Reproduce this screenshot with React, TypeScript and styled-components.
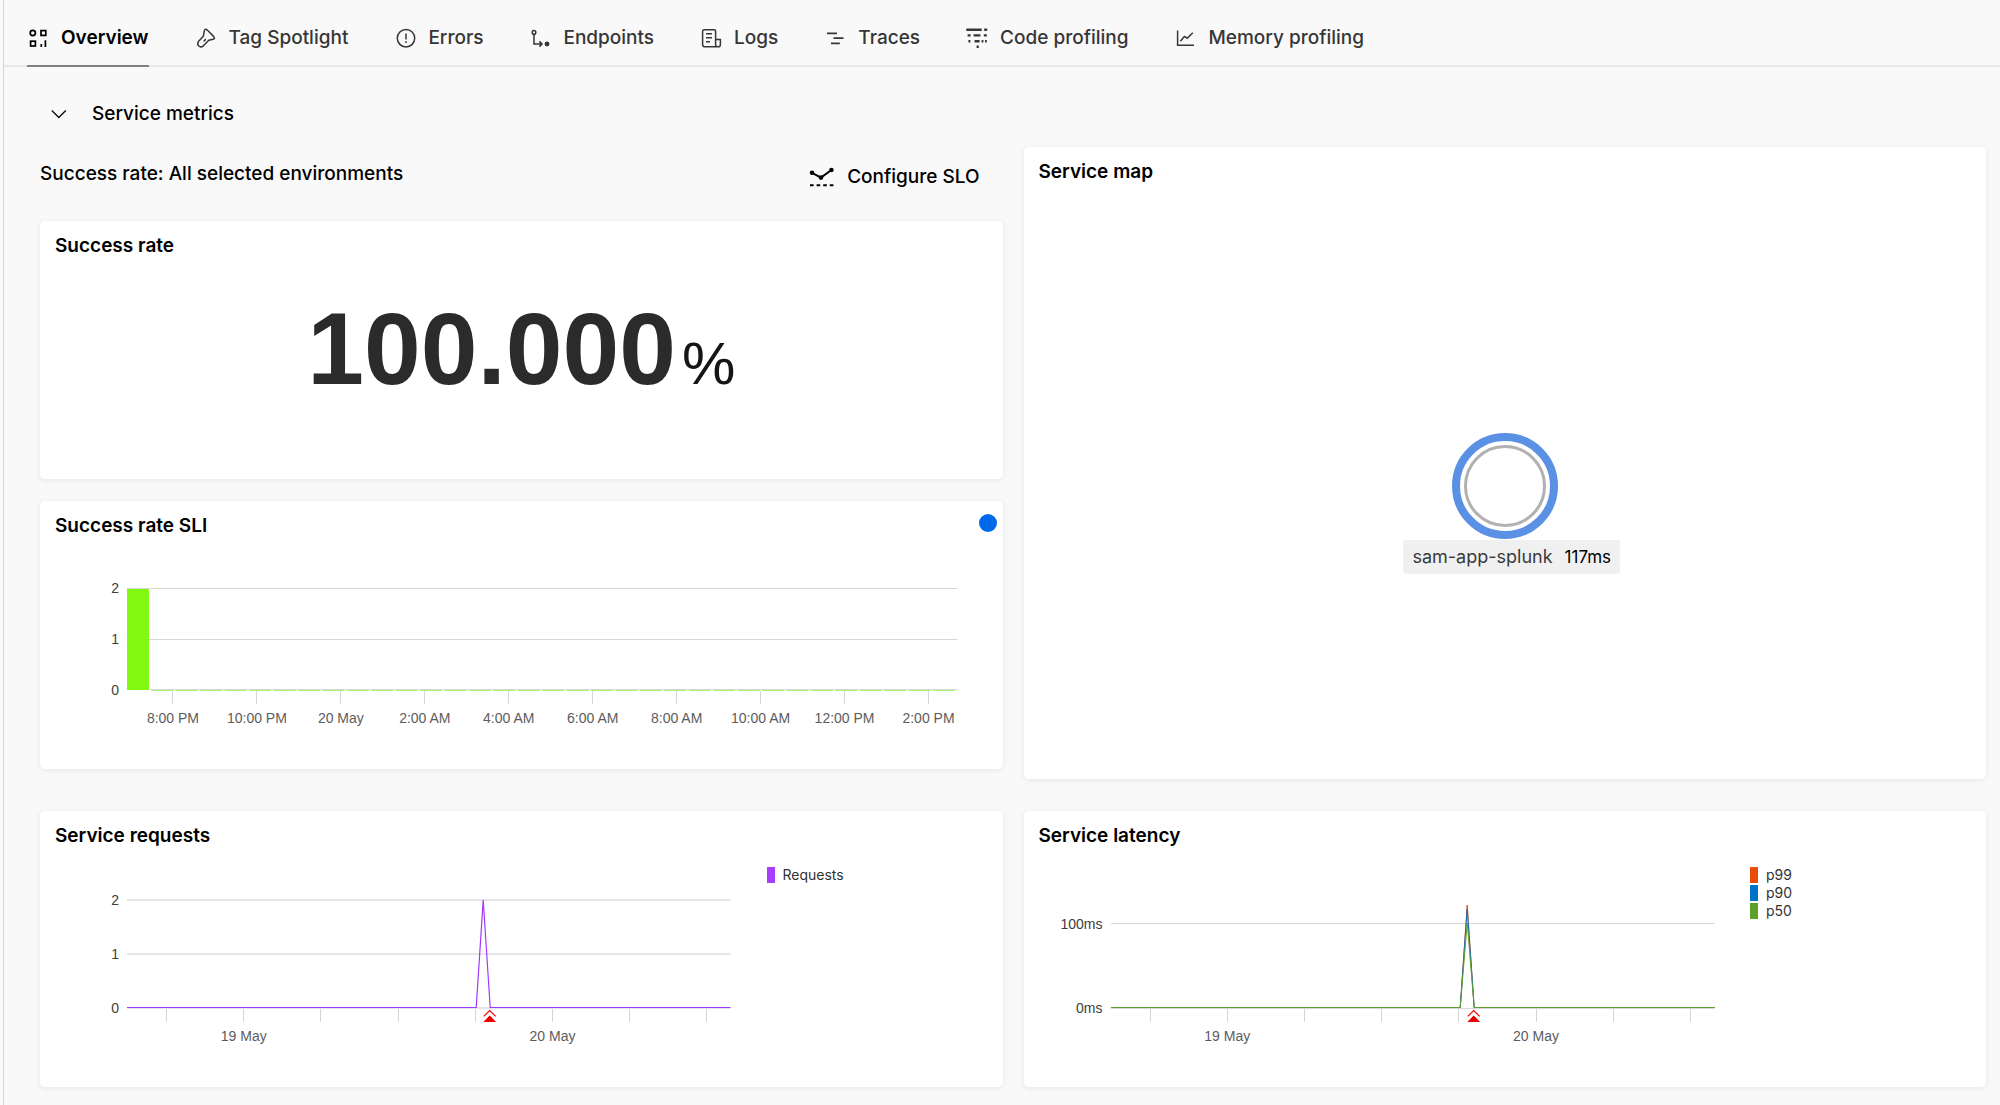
import React, { useState } from 'react';
import styled, { createGlobalStyle } from 'styled-components';

const uiFont = "Inter, 'Liberation Sans', sans-serif";
const chartFont = "'Liberation Sans', Arial, sans-serif";

const GlobalStyle = createGlobalStyle`
  *, *::before, *::after { box-sizing: border-box; }
  body {
    margin: 0;
    background: #f9f9f9;
    color: #000;
    font-family: ${uiFont};
  }
`;

const Page = styled.div`
  min-height: 100vh;
  margin-left: 3px;
  border-left: 1px solid #d6d6d6;
`;

const TabBar = styled.nav`
  display: flex;
  gap: 46px;
  height: 67px;
  padding: 0 23px;
  border-bottom: 2px solid #e8e8e8;
`;

const Tab = styled.a<{ $active?: boolean }>`
  display: flex;
  align-items: center;
  gap: 14px;
  height: 67px;
  padding-top: 10px;
  border-bottom: 2px solid ${(p) => (p.$active ? '#818181' : 'transparent')};
  color: ${(p) => (p.$active ? '#000' : '#363636')};
  font-size: 19px;
  font-weight: ${(p) => (p.$active ? 600 : 500)};
  line-height: 24px;
  text-decoration: none;
  white-space: nowrap;
`;

const TabIcon = styled.svg`
  flex: none;
  width: 20px;
  height: 20px;
  overflow: visible;
  fill: none;
  stroke: currentColor;
  stroke-width: 1.5;
`;

const Main = styled.main`
  padding: 0 14px 18px 36px;
`;

const SectionToggle = styled.button`
  display: flex;
  align-items: center;
  gap: 25px;
  margin: 35px 0 21px;
  padding: 0 11px;
  border: 0;
  background: none;
  color: #000;
  font-family: inherit;
  font-size: 19px;
  font-weight: 500;
  line-height: 24px;
  cursor: pointer;
`;

const Chevron = styled.svg<{ $open: boolean }>`
  width: 16px;
  height: 16px;
  fill: none;
  stroke: #111;
  stroke-width: 1.4;
  transform: rotate(${(p) => (p.$open ? 0 : -90)}deg);
`;

const Grid = styled.div`
  display: grid;
  grid-template-columns: 1fr 1fr;
  gap: 32px 21px;
`;

const Column = styled.div`
  display: flex;
  flex-direction: column;
  gap: 22px;
  padding-bottom: 10px;
`;

const Toolbar = styled.div`
  display: flex;
  align-items: flex-start;
  justify-content: space-between;
  height: 52px;
  padding: 15px 23px 0 0;
`;

const ToolbarTitle = styled.h2`
  margin: 0;
  font-size: 19px;
  font-weight: 500;
  line-height: 24px;
`;

const ConfigureButton = styled.button`
  display: flex;
  align-items: center;
  gap: 12px;
  padding: 3px 0;
  border: 0;
  background: none;
  color: #000;
  font-family: inherit;
  font-size: 19px;
  font-weight: 500;
  line-height: 24px;
  cursor: pointer;
`;

const ConfigureIcon = styled.svg`
  width: 26px;
  height: 24px;
  fill: none;
  stroke: currentColor;
  stroke-width: 2;
`;

const Card = styled.section<{ $height?: number }>`
  display: flex;
  flex-direction: column;
  min-width: 0;
  min-height: ${(p) => (p.$height ? `${p.$height}px` : 'auto')};
  border-radius: 5px;
  background: #fff;
  box-shadow: 0 1px 6px rgba(0, 0, 0, 0.08);
`;

const CardHeader = styled.header`
  display: flex;
  justify-content: space-between;
  padding: 13px 6px 0 15px;
`;

const CardTitle = styled.h3`
  margin: 0;
  font-size: 19px;
  font-weight: 600;
  line-height: 24px;
`;

const StatusDot = styled.span`
  width: 18px;
  height: 18px;
  border-radius: 50%;
  background: #0068ea;
`;

const Figure = styled.p`
  display: flex;
  align-items: baseline;
  justify-content: center;
  gap: 6px;
  margin: 0;
  padding-top: 31px;
  color: #2b2b2b;
  font-family: ${chartFont};
  font-size: 102px;
  font-weight: 700;
  line-height: 120px;
`;

const Unit = styled.span`
  color: #151515;
  font-size: 60px;
  font-weight: 400;
`;

const ChartRow = styled.div<{ $top: number; $right: number }>`
  display: grid;
  grid-template-columns: 79px minmax(0, 1fr) auto;
  column-gap: 8px;
  padding: ${(p) => `${p.$top}px ${p.$right}px 0 0`};
  font-family: ${chartFont};
  font-size: 14px;
  line-height: 16px;
`;

const YAxis = styled.div<{ $height: number; $top: number }>`
  display: flex;
  flex-direction: column;
  justify-content: space-between;
  height: ${(p) => p.$height}px;
  margin-top: ${(p) => p.$top}px;
  color: #3d3d3d;
  text-align: right;
`;

const Plot = styled.svg<{ $height: number }>`
  display: block;
  width: 100%;
  height: ${(p) => p.$height}px;
  overflow: visible;
`;

const XAxis = styled.div<{ $count: number; $left: number; $over: number }>`
  display: grid;
  grid-template-columns: repeat(${(p) => p.$count}, minmax(0, 1fr));
  margin: ${(p) => `0 -${p.$over}px 0 ${p.$left}px`};
`;

const Tick = styled.span`
  display: flex;
  flex-direction: column;
  align-items: center;
  gap: 6px;
  color: #5c5c5c;
  white-space: nowrap;

  &::before {
    content: '';
    width: 1px;
    height: 13px;
    background: #d6d6d6;
  }
`;

const Legend = styled.ul`
  display: flex;
  flex-direction: column;
  gap: 2px;
  width: 264px;
  margin: -32px 0 0;
  padding: 0 0 0 28px;
  list-style: none;
  font-family: ${uiFont};
  font-size: 14px;
  color: #333;
`;

const LegendItem = styled.li`
  display: flex;
  align-items: center;
  gap: 8px;
  line-height: 16px;
`;

const Swatch = styled.span<{ $color: string }>`
  width: 8px;
  height: 16px;
  background: ${(p) => p.$color};
`;

const MapCanvas = styled.div`
  display: flex;
  flex: 1;
  align-items: center;
  justify-content: center;
  padding-top: 43px;
`;

const ServiceNode = styled.div`
  display: flex;
  flex-direction: column;
  align-items: center;
  gap: 1px;
`;

const NodeRing = styled.svg`
  width: 106px;
  height: 106px;
  fill: #fff;
`;

const NodeLabel = styled.div`
  display: flex;
  align-items: center;
  gap: 12px;
  height: 34px;
  margin-left: 14px;
  padding: 0 9px;
  border-radius: 3px;
  background: #f0f0f0;
  color: #3a3a3a;
  font-size: 18px;
  line-height: 24px;
`;

const Latency = styled.span`
  color: #000;
  font-size: 17px;
`;

const tabs: { label: string; icon: React.ReactNode }[] = [
  {
    label: 'Overview',
    icon: (
      <g strokeWidth="1.7">
        <circle cx="5.8" cy="5" r="2.6" />
        <rect x="14" y="2.6" width="4.8" height="4.8" />
        <rect x="3.6" y="13.2" width="4.8" height="4.8" />
        <path d="M14.3 16v3M18.4 12.3V19" />
      </g>
    ),
  },
  {
    label: 'Tag Spotlight',
    icon: (
      <path
        strokeLinejoin="round"
        strokeLinecap="round"
        d="M12 1.8 18.8 8.6Q20.3 10.6 18 11.3L13.8 12.3 8.4 17.8Q5.8 19.8 3.8 18Q1.8 16 3.4 13.6L8.3 8.3 9.2 3.2Q10 .4 12 1.8ZM9 13l1.4-1.4"
      />
    ),
  },
  {
    label: 'Errors',
    icon: (
      <>
        <circle cx="12" cy="10.2" r="8.7" />
        <path d="M12 5.6v6M12 13.2v1.8" />
      </>
    ),
  },
  {
    label: 'Endpoints',
    icon: (
      <>
        <circle cx="5" cy="4.4" r="1.8" />
        <path d="M5 6.4V16h7.6M10.4 13.4 13 16l-2.6 2.6" />
        <circle cx="18" cy="16" r="1.7" fill="currentColor" />
      </>
    ),
  },
  {
    label: 'Logs',
    icon: (
      <path d="M15.6 11.6V3.4Q15.6 1.7 14 1.7H4.2Q2.6 1.7 2.6 3.4V16.4Q2.6 18.8 5 18.8H18.2Q20.4 18.8 20.4 16.4V11.6H15.6V16.4Q15.6 18.6 17.8 18.8M6 5.7h6M6 9.8h6M6 13.7h4" />
    ),
  },
  {
    label: 'Traces',
    icon: <path strokeWidth="1.8" d="M3 5.3h10M9.5 10.1h10M7 15.3h8.8" />,
  },
  {
    label: 'Code profiling',
    icon: (
      <g strokeWidth="2.4">
        <path d="M.3 1.8h15.4M18.2 1.8h3M1.6 7.4h3M7.6 7.4h6.8M17.8 7.4h3" />
        <path d="M2.4 13.2h2M8.6 13.2h5M15.6 13.2h1.8M19 13.2h1.8M10.6 18.7h2.2" />
      </g>
    ),
  },
  {
    label: 'Memory profiling',
    icon: <path d="M3.6 2.6V17.3H20M6.4 13.2 10.4 8.4 13.2 10.2 18.8 4.8" />,
  },
];

const sliLabels = [
  '8:00 PM', '10:00 PM', '20 May', '2:00 AM', '4:00 AM',
  '6:00 AM', '8:00 AM', '10:00 AM', '12:00 PM', '2:00 PM',
];
const dayLabels = ['', '19 May', '', '', '', '20 May', '', ''];

const latencySeries = [
  { name: 'p99', color: '#ea4a0b', peak: 6 },
  { name: 'p90', color: '#0073c8', peak: 10 },
  { name: 'p50', color: '#5da029', peak: 24 },
];

const spike = (peak: number) => `0,108.5 349.5,108.5 356.5,${peak} 363.5,108.5 604,108.5`;

const SLI_BUCKETS = 34;
const SLI_STEP = 831 / SLI_BUCKETS;

function AlertMarker() {
  return (
    <>
      <path d="M357 117.4 363 111.6 369 117.4" fill="none" stroke="#ec0000" strokeWidth="1.2" />
      <path d="M363 116.4 369.4 123H356.6Z" fill="#ec0000" />
    </>
  );
}

function SliChart() {
  return (
    <ChartRow $top={50} $right={37}>
      <YAxis $height={118} $top={-8}>
        <span>2</span>
        <span>1</span>
        <span>0</span>
      </YAxis>
      <div>
        <Plot $height={103} viewBox="0 0 831 103" preserveAspectRatio="none" role="img" aria-label="Success rate SLI">
          <path d="M0 .5H831M0 51.5H831M0 101.5H831" stroke="#d9d9d9" />
          <rect x="0" y="1" width="22" height="101" fill="#82f810" />
          {Array.from({ length: SLI_BUCKETS - 1 }, (_, i) => (
            <rect key={i} x={(i + 1) * SLI_STEP} y="102" width="22" height="1" fill="#a5f272" />
          ))}
        </Plot>
        <XAxis $count={10} $left={4} $over={13}>
          {sliLabels.map((label) => (
            <Tick key={label}>{label}</Tick>
          ))}
        </XAxis>
      </div>
    </ChartRow>
  );
}

function DayAxis() {
  return (
    <XAxis $count={8} $left={1} $over={15}>
      {dayLabels.map((label, i) => (
        <Tick key={i}>{label}</Tick>
      ))}
    </XAxis>
  );
}

function RequestsChart() {
  return (
    <ChartRow $top={51} $right={0}>
      <YAxis $height={124} $top={-7}>
        <span>2</span>
        <span>1</span>
        <span>0</span>
      </YAxis>
      <div>
        <Plot $height={110} viewBox="0 0 604 110" preserveAspectRatio="none" role="img" aria-label="Service requests">
          <path d="M0 1H604M0 55H604M0 109H604" stroke="#e5e5e5" strokeWidth="2" />
          <polyline points={spike(1)} fill="none" stroke="#a238ff" strokeWidth="1.2" />
          <AlertMarker />
        </Plot>
        <DayAxis />
      </div>
      <Legend>
        <LegendItem>
          <Swatch $color="#a63dff" />
          Requests
        </LegendItem>
      </Legend>
    </ChartRow>
  );
}

function LatencyChart() {
  return (
    <ChartRow $top={51} $right={0}>
      <YAxis $height={100} $top={17}>
        <span>100ms</span>
        <span>0ms</span>
      </YAxis>
      <div>
        <Plot $height={110} viewBox="0 0 604 110" preserveAspectRatio="none" role="img" aria-label="Service latency">
          <path d="M0 24.5H604M0 109.5H604" stroke="#d9d9d9" />
          {latencySeries.map((s) => (
            <polyline key={s.name} points={spike(s.peak)} fill="none" stroke={s.color} strokeWidth="1" />
          ))}
          <AlertMarker />
        </Plot>
        <DayAxis />
      </div>
      <Legend>
        {latencySeries.map((s) => (
          <LegendItem key={s.name}>
            <Swatch $color={s.color} />
            {s.name}
          </LegendItem>
        ))}
      </Legend>
    </ChartRow>
  );
}

export default function App() {
  const [active, setActive] = useState('Overview');
  const [open, setOpen] = useState(true);

  return (
    <Page>
      <GlobalStyle />
      <TabBar>
        {tabs.map(({ label, icon }) => (
          <Tab
            key={label}
            href={`#${label.toLowerCase().replace(' ', '-')}`}
            $active={active === label}
            onClick={() => setActive(label)}
          >
            <TabIcon viewBox="0 0 20 20" aria-hidden="true">{icon}</TabIcon>
            {label}
          </Tab>
        ))}
      </TabBar>
      <Main>
        <SectionToggle type="button" aria-expanded={open} onClick={() => setOpen(!open)}>
          <Chevron $open={open} viewBox="0 0 16 16" aria-hidden="true">
            <path d="m.8 4.6 7 7 7-7" />
          </Chevron>
          Service metrics
        </SectionToggle>
        {open && (
          <Grid>
            <Column>
              <Toolbar>
                <ToolbarTitle>Success rate: All selected environments</ToolbarTitle>
                <ConfigureButton type="button">
                  <ConfigureIcon viewBox="0 0 26 24" aria-hidden="true">
                    <path d="M3 7.8 12 12.6 22.4 5" />
                    <g fill="currentColor" stroke="none">
                      <circle cx="3" cy="7.8" r="2.3" />
                      <circle cx="12" cy="12.6" r="2.3" />
                      <circle cx="22.4" cy="5" r="2.3" />
                    </g>
                    <path d="M1 20.2h3.6M7.6 20.2h3.6M14.2 20.2h3.6M20.8 20.2h3.6" />
                  </ConfigureIcon>
                  Configure SLO
                </ConfigureButton>
              </Toolbar>
              <Card $height={258}>
                <CardHeader>
                  <CardTitle>Success rate</CardTitle>
                </CardHeader>
                <Figure>
                  100.000<Unit>%</Unit>
                </Figure>
              </Card>
              <Card $height={268}>
                <CardHeader>
                  <CardTitle>Success rate SLI</CardTitle>
                  <StatusDot />
                </CardHeader>
                <SliChart />
              </Card>
            </Column>
            <Card>
              <CardHeader>
                <CardTitle>Service map</CardTitle>
              </CardHeader>
              <MapCanvas>
                <ServiceNode>
                  <NodeRing viewBox="0 0 106 106" aria-hidden="true">
                    <circle cx="53" cy="53" r="49" stroke="#5b91e5" strokeWidth="8" />
                    <circle cx="53" cy="53" r="39.5" stroke="#b1b1b1" strokeWidth="3" />
                  </NodeRing>
                  <NodeLabel>
                    sam-app-splunk <Latency>117ms</Latency>
                  </NodeLabel>
                </ServiceNode>
              </MapCanvas>
            </Card>
            <Card $height={276}>
              <CardHeader>
                <CardTitle>Service requests</CardTitle>
              </CardHeader>
              <RequestsChart />
            </Card>
            <Card $height={276}>
              <CardHeader>
                <CardTitle>Service latency</CardTitle>
              </CardHeader>
              <LatencyChart />
            </Card>
          </Grid>
        )}
      </Main>
    </Page>
  );
}
